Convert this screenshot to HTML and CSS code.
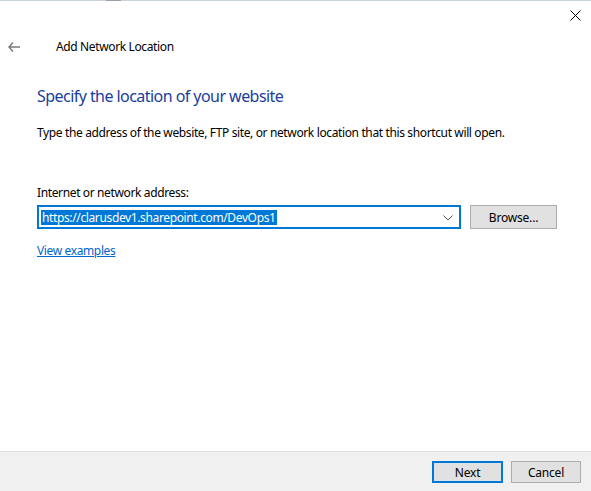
FILE: index.html
```html
<!DOCTYPE html>
<html>
<head>
<meta charset="utf-8">
<link rel="stylesheet" href="styles.css">
</head>
<body>
<div class="window">
  <div class="topline"><span class="seg"></span></div>
  <div class="titlebar">
    <span class="close">
      <svg width="11" height="11" viewBox="0 0 11 11"><path d="M0.5 0.5 L10.5 10.5 M10.5 0.5 L0.5 10.5" stroke="#000" stroke-width="1" fill="none"/></svg>
    </span>
  </div>
  <div class="navrow">
    <span class="back">
      <svg width="12" height="10" viewBox="0 0 12 10"><path d="M5 0.5 L0.9 5 L5 9.5 M1 5 H12" stroke="#7a7a7a" stroke-width="1.4" fill="none"/></svg>
    </span>
    <span class="navtitle">Add Network Location</span>
  </div>
  <div class="content">
    <h1 class="heading">Specify the location of your website</h1>
    <p class="desc">Type the address of the website, FTP site, or network location that this shortcut will open.</p>
    <label class="label">Internet or network address:</label>
    <div class="inputrow">
      <div class="combo">
        <span class="sel">https://clarusdev1.sharepoint.com/DevOps1</span>
        <svg class="chev" width="10" height="6" viewBox="0 0 10 6"><path d="M0.5 0.5 L5 5 L9.5 0.5" stroke="#555" stroke-width="1" fill="none"/></svg>
      </div>
      <button class="btn browse">Browse...</button>
    </div>
    <a class="link" href="#">View examples</a>
  </div>
  <div class="footer">
    <button class="btn next">Next</button>
    <button class="btn cancel">Cancel</button>
  </div>
</div>
</body>
</html>
```

FILE: styles.css
```css
html, body {
  margin: 0;
  padding: 0;
}
body {
  width: 591px;
  height: 491px;
  overflow: hidden;
  background: #fff;
  font-family: "Noto Sans", "Liberation Sans", sans-serif;
  font-size: 12px;
  letter-spacing: -0.37px;
  color: #000;
}
.window {
  display: flex;
  flex-direction: column;
  height: 491px;
}
.topline {
  height: 1px;
  background: #c9d3dc;
  display: flex;
}
.topline .seg {
  margin-left: 106px;
  width: 15px;
  background: #9a9fa5;
}
.titlebar {
  height: 29px;
  display: flex;
  justify-content: flex-end;
}
.close {
  width: 11px;
  height: 11px;
  margin-top: 9px;
  margin-right: 10px;
  display: flex;
}
.navrow {
  height: 33px;
  display: flex;
  align-items: center;
}
.back {
  width: 12px;
  height: 10px;
  margin-left: 8px;
  display: flex;
}
.navtitle {
  margin-left: 36px;
}
.content {
  flex: 1;
  padding: 0 0 0 37px;
}
.heading {
  margin: 22px 0 0 0;
  font-size: 16px;
  font-weight: normal;
  color: #1a3e9c;
  line-height: 22px;
  letter-spacing: -0.55px;
}
.desc {
  margin: 17px 0 0 0;
  line-height: 17px;
}
.label {
  display: block;
  margin-top: 43px;
  line-height: 17px;
}
.inputrow {
  display: flex;
  align-items: center;
  margin-top: 4px;
}
.combo {
  width: 422px;
  height: 20px;
  border: 1px solid #0078d7;
  outline: 1px solid #0078d7;
  outline-offset: -2px;
  display: flex;
  align-items: center;
  padding: 1px 0;
  position: relative;
}
.combo .sel {
  margin-left: 3px;
  background: #0078d7;
  color: #fff;
  line-height: 15px;
  padding: 0 1px;
}
.combo .chev {
  position: absolute;
  right: 7px;
  top: 9px;
}
.btn {
  font-family: inherit;
  font-size: 12px;
  letter-spacing: -0.2px;
  background: #e1e1e1;
  border: 1px solid #adadad;
  color: #000;
  padding: 0;
  margin: 0;
}
.browse {
  margin-left: 9px;
  width: 87px;
  height: 24px;
}
.link {
  display: inline-block;
  margin-top: 13px;
  color: #0066cc;
  text-decoration: underline;
  line-height: 17px;
}
.footer {
  background: #f0f0f0;
  border-top: 1px solid #dfdfdf;
  display: flex;
  justify-content: flex-end;
  align-items: flex-start;
  padding: 9px 10px 0 0;
  box-sizing: border-box;
  height: 40px;
}
.next {
  width: 71px;
  height: 22px;
  border: 2px solid #0078d7;
}
.cancel {
  width: 70px;
  height: 22px;
  margin-left: 8px;
}
```
